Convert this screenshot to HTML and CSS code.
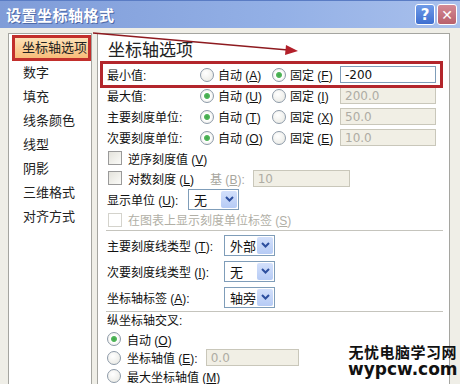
FILE: index.html
```html
<!DOCTYPE html>
<html lang="zh-CN">
<head>
    <meta charset="UTF-8">
    <title>设置坐标轴格式</title>
    <link rel="stylesheet" href="styles.css">
</head>
<body>

<div class="dialog">
    <!-- Title bar -->
    <div class="titlebar">
        <span class="title">设置坐标轴格式</span>
        <div class="title-buttons">
            <span class="tbtn help">?</span>
            <span class="tbtn close">✕</span>
        </div>
    </div>

    <div class="main">
        <!-- Category list -->
        <ul class="nav">
            <li class="nav-item active">坐标轴选项</li>
            <li class="nav-item">数字</li>
            <li class="nav-item">填充</li>
            <li class="nav-item">线条颜色</li>
            <li class="nav-item">线型</li>
            <li class="nav-item">阴影</li>
            <li class="nav-item">三维格式</li>
            <li class="nav-item">对齐方式</li>
        </ul>

        <!-- Options panel -->
        <div class="panel">
            <h2 class="panel-title">坐标轴选项</h2>

            <div class="axis-row highlight">
                <span class="row-label">最小值:</span>
                <span class="radio"><span class="dot"></span><span>自动 (<u>A</u>)</span></span>
                <span class="radio"><span class="dot on"></span><span>固定 (<u>F</u>)</span></span>
                <span class="field">-200</span>
            </div>
            <div class="axis-row">
                <span class="row-label">最大值:</span>
                <span class="radio"><span class="dot on"></span><span>自动 (<u>U</u>)</span></span>
                <span class="radio"><span class="dot"></span><span>固定 (<u>I</u>)</span></span>
                <span class="field disabled">200.0</span>
            </div>
            <div class="axis-row">
                <span class="row-label">主要刻度单位:</span>
                <span class="radio"><span class="dot on"></span><span>自动 (<u>T</u>)</span></span>
                <span class="radio"><span class="dot"></span><span>固定 (<u>X</u>)</span></span>
                <span class="field disabled">50.0</span>
            </div>
            <div class="axis-row">
                <span class="row-label">次要刻度单位:</span>
                <span class="radio"><span class="dot on"></span><span>自动 (<u>O</u>)</span></span>
                <span class="radio"><span class="dot"></span><span>固定 (<u>E</u>)</span></span>
                <span class="field disabled">10.0</span>
            </div>

            <div class="check-row">
                <span class="box"></span><span>逆序刻度值 (<u>V</u>)</span>
            </div>
            <div class="check-row">
                <span class="box"></span><span>对数刻度 (<u>L</u>)</span>
                <span class="base-label">基 (<u>B</u>):</span>
                <span class="field disabled base-field">10</span>
            </div>
            <div class="check-row unit-row">
                <span class="unit-label">显示单位 (<u>U</u>):</span>
                <span class="select">无<span class="drop"><svg width="9" height="6" viewBox="0 0 9 6"><path d="M1 1 L4.5 4.5 L8 1" fill="none" stroke="#2d4f9e" stroke-width="2"/></svg></span></span>
            </div>
            <div class="check-row muted">
                <span class="box off"></span><span>在图表上显示刻度单位标签 (<u>S</u>)</span>
            </div>

            <div class="sep"></div>

            <div class="select-row">
                <span class="sel-label">主要刻度线类型 (<u>T</u>):</span>
                <span class="select">外部<span class="drop"><svg width="9" height="6" viewBox="0 0 9 6"><path d="M1 1 L4.5 4.5 L8 1" fill="none" stroke="#2d4f9e" stroke-width="2"/></svg></span></span>
            </div>
            <div class="select-row">
                <span class="sel-label">次要刻度线类型 (<u>I</u>):</span>
                <span class="select">无<span class="drop"><svg width="9" height="6" viewBox="0 0 9 6"><path d="M1 1 L4.5 4.5 L8 1" fill="none" stroke="#2d4f9e" stroke-width="2"/></svg></span></span>
            </div>
            <div class="select-row">
                <span class="sel-label">坐标轴标签 (<u>A</u>):</span>
                <span class="select">轴旁<span class="drop"><svg width="9" height="6" viewBox="0 0 9 6"><path d="M1 1 L4.5 4.5 L8 1" fill="none" stroke="#2d4f9e" stroke-width="2"/></svg></span></span>
            </div>

            <div class="sep"></div>

            <div class="cross-title">纵坐标轴交叉:</div>
            <div class="cross-row">
                <span class="dot on"></span><span>自动 (<u>O</u>)</span>
            </div>
            <div class="cross-row">
                <span class="dot"></span><span>坐标轴值 (<u>E</u>):</span>
                <span class="field disabled cross-field">0.0</span>
            </div>
            <div class="cross-row">
                <span class="dot"></span><span>最大坐标轴值 (<u>M</u>)</span>
            </div>
        </div>
    </div>

    <!-- Red annotation arrow -->
    <svg class="arrow" width="460" height="70" viewBox="0 0 460 70">
        <line x1="93" y1="33" x2="288" y2="50" stroke="#8e1a1f" stroke-width="1.3"/>
        <path d="M298 51 L286 45 L285 55 Z" fill="#b3202a"/>
    </svg>

    <div class="watermark">
        <div class="wm-cn">无忧电脑学习网</div>
        <div class="wm-en">wypcw.com</div>
    </div>
</div>

</body>
</html>
```

FILE: styles.css
```css
body {
    margin: 0;
    padding: 0;
    font-family: "Liberation Sans", "Noto Sans CJK SC", sans-serif;
    font-size: 12px;
    color: #111;
    background: #efeee7;
}

.dialog {
    position: relative;
    width: 460px;
    height: 384px;
    overflow: hidden;
    background: #efeee7;
}

u {
    text-decoration: underline;
    text-underline-offset: 1px;
}

/* Title bar */
.titlebar {
    height: 28px;
    display: flex;
    align-items: center;
    justify-content: space-between;
    padding: 0 3px 0 6px;
    background: linear-gradient(to right, #7f9cd8, #93b0e6 60%, #a9c0ec);
    border-top: 1px solid #5a7cc4;
    box-sizing: border-box;
}

.title {
    color: #fff;
    font-size: 15px;
    font-weight: bold;
    letter-spacing: 0.5px;
    text-shadow: 1px 1px 0 #4f6aa8;
}

.title-buttons {
    display: flex;
    gap: 2px;
}

.tbtn {
    width: 20px;
    height: 21px;
    display: flex;
    align-items: center;
    justify-content: center;
    color: #fff;
    font-family: "DejaVu Sans", sans-serif;
    font-weight: bold;
    border: 1px solid #fff;
    border-radius: 3px;
    box-sizing: border-box;
}

.help {
    background: linear-gradient(#6f9be8, #3f6fd0);
    font-size: 15px;
}

.close {
    background: linear-gradient(#d48a95, #b8606c);
    font-size: 14px;
}

/* Main area */
.main {
    display: flex;
    gap: 5px;
    padding: 5px 10px 0 8px;
}

.nav {
    list-style: none;
    margin: 0;
    padding: 1px 0 0 3px;
    width: 84px;
    height: 360px;
    background: #fff;
    border: 1px solid #a5a5a0;
    box-sizing: border-box;
}

.nav-item {
    height: 24px;
    line-height: 24px;
    padding-left: 11px;
    font-size: 13px;
    color: #222;
    white-space: nowrap;
}

.nav-item.active {
    height: 26px;
    line-height: 20px;
    width: 79px;
    padding-left: 7px;
    background: linear-gradient(#fde2b8, #f8bc79);
    border: 3px solid #c22f2c;
    box-sizing: border-box;
}

.panel {
    flex: 1;
    height: 360px;
    background: #fff;
    border: 1px solid #a5a5a0;
    box-sizing: border-box;
    padding: 0 6px 0 2px;
}

.panel-title {
    margin: 0;
    height: 30px;
    padding: 6px 0 0 8px;
    box-sizing: border-box;
    font-size: 17px;
    font-weight: normal;
    line-height: 22px;
    color: #222;
}

/* Min/max rows */
.axis-row {
    display: grid;
    grid-template-columns: 93px 72px 68px 96px;
    align-items: center;
    height: 21px;
    margin-left: 3px;
    padding-left: 4px;
    margin-right: 3px;
    white-space: nowrap;
}

.axis-row.highlight {
    outline: 3px solid #b3262c;
}

.radio {
    display: flex;
    align-items: center;
    gap: 4px;
}

.dot {
    display: inline-block;
    width: 12px;
    height: 12px;
    border: 1px solid #8d9aa8;
    border-radius: 50%;
    background: radial-gradient(circle at 40% 35%, #fff, #e6e6e0);
    flex-shrink: 0;
}

.dot.on {
    background: radial-gradient(circle, #3fa44a 0, #54b85c 2.5px, #fff 3.5px, #e6e6e0 100%);
}

.field {
    height: 17px;
    line-height: 17px;
    padding-left: 4px;
    border: 1px solid #7f9db9;
    background: #fff;
    font-family: "DejaVu Sans", sans-serif;
    font-size: 12px;
    box-sizing: border-box;
}

.field.disabled {
    background: #f1efe5;
    border-color: #c9c7ba;
    color: #aeaca4;
}

/* Checkbox rows */
.check-row {
    display: flex;
    align-items: center;
    gap: 6px;
    height: 20px;
    padding-left: 8px;
    white-space: nowrap;
}

.check-row.unit-row {
    height: 22px;
    gap: 0;
    padding-left: 7px;
}

.check-row.muted {
    color: #b1afa6;
    height: 19px;
}

.box {
    display: inline-block;
    width: 12px;
    height: 12px;
    border: 1px solid #9a9a9a;
    background: linear-gradient(135deg, #e4e3dc, #fbfbf8);
    flex-shrink: 0;
}

.box.off {
    border-color: #d4d3cc;
    background: #fff;
}

.base-label {
    margin-left: 10px;
    color: #a8a69e;
}

.base-field {
    width: 97px;
    margin-left: 2px;
}

.unit-label {
    width: 81px;
}

.select {
    display: flex;
    align-items: center;
    justify-content: space-between;
    width: 51px;
    height: 21px;
    padding-left: 5px;
    border: 1px solid #7f9db9;
    background: #fff;
    box-sizing: border-box;
    font-size: 13px;
}

.drop {
    width: 16px;
    height: 17px;
    margin-right: 1px;
    display: flex;
    align-items: center;
    justify-content: center;
    background: linear-gradient(#d3e0fb, #b6cbf5);
    border-radius: 2px;
}

.sep {
    height: 0;
    margin: 1px 0 1px 6px;
    border-top: 1px solid #c5c4bd;
}

.select-row {
    display: flex;
    align-items: center;
    height: 26px;
    padding-left: 7px;
    white-space: nowrap;
}

.sel-label {
    width: 117px;
}

.cross-title {
    height: 17px;
    line-height: 17px;
    padding-left: 7px;
}

.cross-row {
    display: flex;
    align-items: center;
    gap: 6px;
    height: 18.5px;
    padding-left: 7px;
    white-space: nowrap;
}

.cross-field {
    width: 93px;
    margin-left: 2px;
}

/* Overlays */
.arrow {
    position: absolute;
    left: 0;
    top: 0;
    pointer-events: none;
}

.watermark {
    position: absolute;
    left: 348px;
    top: 344px;
    text-align: center;
    font-weight: bold;
    color: #111;
}

.wm-cn {
    font-size: 15px;
    line-height: 17px;
    letter-spacing: 0.5px;
}

.wm-en {
    font-family: "DejaVu Sans", sans-serif;
    font-size: 17px;
    line-height: 17px;
}
```
